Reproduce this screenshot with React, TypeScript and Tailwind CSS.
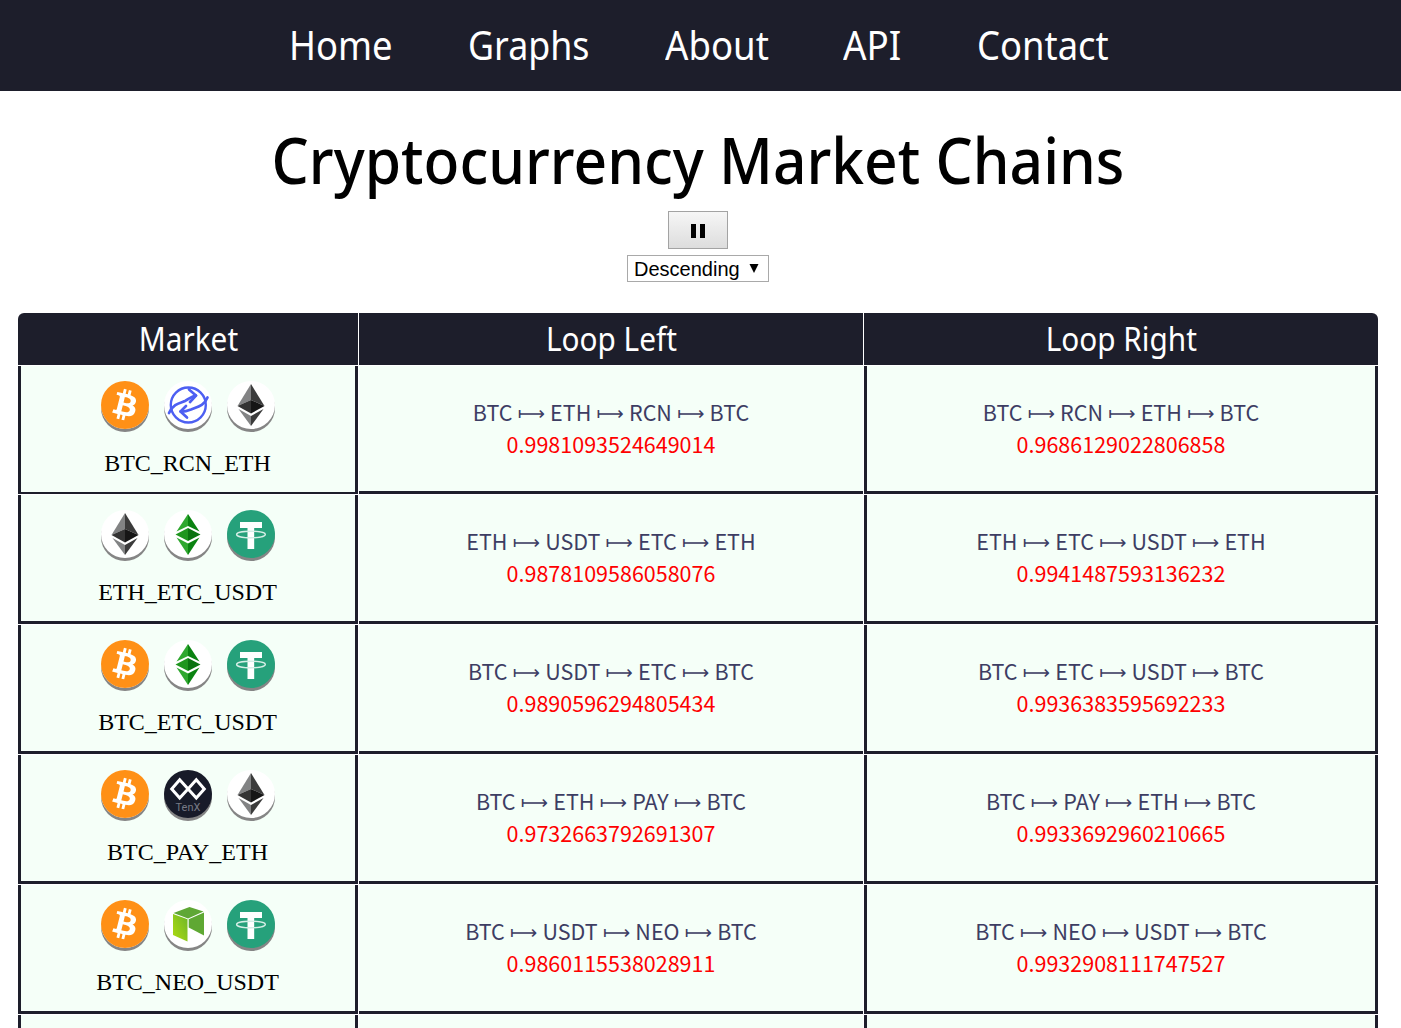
import React from "react";
import { SiBitcoin } from "react-icons/si";

const disc = "block h-12 w-12 overflow-hidden rounded-full shadow-[0_3px_0_#858585]";

function Btc() {
  return (
    <span className={`${disc} bg-white`}>
      <SiBitcoin className="h-12 w-12 scale-104 text-[#ff9016]" />
    </span>
  );
}

function Eth() {
  return (
    <svg viewBox="0 0 48 48" className={`${disc} bg-white`}>
      <path d="M24 3 10.500 25 24 19Z" fill="#828384" />
      <path d="M24 3 37.500 25 24 19Z" fill="#3b3b3b" />
      <path d="M10.500 25 24 19V32.500Z" fill="#343434" />
      <path d="M37.500 25 24 19V32.500Z" fill="#161616" />
      <path d="M11.500 28 24 35V45Z" fill="#828384" />
      <path d="M36.500 28 24 35V45Z" fill="#3b3b3b" />
    </svg>
  );
}

function Etc() {
  return (
    <svg viewBox="0 0 48 48" className={`${disc} bg-white`}>
      <path d="M24 4 12.500 21.500 24 16Z" fill="#2fa82f" />
      <path d="M24 4 35.500 21.500 24 16Z" fill="#0b8311" />
      <path d="M11.500 24.500 24 18V31Z" fill="#1f961f" />
      <path d="M36.500 24.500 24 18V31Z" fill="#0a7310" />
      <path d="M12.500 27.500 24 33.500V45Z" fill="#2fa82f" />
      <path d="M35.500 27.500 24 33.500V45Z" fill="#0b8311" />
    </svg>
  );
}

function Rcn() {
  return (
    <svg viewBox="0 0 48 48" className={`${disc} bg-white`} fill="none" stroke="#4d5ff2" strokeLinecap="round" strokeLinejoin="round">
      <circle cx="24.300" cy="24" r="17.500" strokeWidth="2.400" />
      <path d="M5 32C9 23 16 22 21 20 25 18 28 15 32 14.500" strokeWidth="2.700" />
      <path d="M25 8.500 32 14.500 26 21" strokeWidth="2.700" />
      <path d="M43.500 16.500C40 25 33 26 27 28.500 23 30 20 31 16.500 30.500" strokeWidth="2.700" />
      <path d="M22 25 16.500 30.500 23 36.500" strokeWidth="2.700" />
    </svg>
  );
}

function Usdt() {
  return (
    <svg viewBox="0 0 48 48" className={`${disc} bg-[#26a17b]`}>
      <path d="M13 12H35V18H27.200V39H20.500V18H13Z" fill="#fff" />
      <ellipse cx="24" cy="24.500" rx="14.400" ry="3.300" fill="none" stroke="#d5eee6" strokeWidth="1.400" />
    </svg>
  );
}

function Pay() {
  return (
    <svg viewBox="0 0 48 48" className={`${disc} bg-[#181b29]`}>
      <path d="M24 19 32.300 9.800 40.300 19 32.300 28 15.700 9.800 7.700 19 15.700 28Z" fill="none" stroke="#fff" strokeWidth="3" />
      <text x="24" y="40.500" textAnchor="middle" fontSize="11" fill="#777985" textLength="25" fontFamily="Roboto, sans-serif">TenX</text>
    </svg>
  );
}

function Neo() {
  return (
    <svg viewBox="0 0 48 48" className={`${disc} bg-white`}>
      <defs>
        <linearGradient id="neo" x1="0" x2="1" y1="1" y2="0">
          <stop offset="0" stopColor="#b0dc10" />
          <stop offset="1" stopColor="#6cb528" />
        </linearGradient>
      </defs>
      <path d="M9.500 13 25.500 7 39.500 11.500 24 18.500Z" fill="#5fa735" />
      <path d="M9 14 23.500 19.200V41.500L9 35Z" fill="url(#neo)" />
      <path d="M24.700 19.200 40 12.500V35.500L24.700 27.500Z" fill="#5fa833" />
    </svg>
  );
}

const icons: Record<string, () => React.ReactElement> = { BTC: Btc, ETH: Eth, ETC: Etc, RCN: Rcn, USDT: Usdt, PAY: Pay, NEO: Neo };

type Row = { coins: string[]; left: string; right: string };

const rows: Row[] = [
  { coins: ["BTC", "RCN", "ETH"], left: "0.9981093524649014", right: "0.9686129022806858" },
  { coins: ["ETH", "ETC", "USDT"], left: "0.9878109586058076", right: "0.9941487593136232" },
  { coins: ["BTC", "ETC", "USDT"], left: "0.9890596294805434", right: "0.9936383595692233" },
  { coins: ["BTC", "PAY", "ETH"], left: "0.9732663792691307", right: "0.9933692960210665" },
  { coins: ["BTC", "NEO", "USDT"], left: "0.9860115538028911", right: "0.9932908111747527" },
];

function Chain({ path, value }: { path: string[]; value: string }) {
  return (
    <div className="flex h-full flex-col items-center pt-[30px] font-['Noto_Sans_CJK_SC',sans-serif] text-[21.5px] leading-8">
      <div className="flex h-8 whitespace-nowrap text-[#3d3d63]">
        {path.map((c, i) => (
          <React.Fragment key={i}>
            {i > 0 && <span className="flex w-[37.700px] justify-center pt-px font-['DejaVu_Sans',sans-serif] text-[19px] leading-8">⟼</span>}
            <span>{c}</span>
          </React.Fragment>
        ))}
      </div>
      <div className="h-8 text-[#ff0000]">{value}</div>
    </div>
  );
}

const grid = "grid grid-cols-[340px_504px_514px] gap-x-px";
const link = "origin-left whitespace-nowrap";

export default function App() {
  return (
    <div className="h-[1028px] w-[1401px] overflow-hidden bg-white text-black">
      <nav className="flex h-[91px] justify-center gap-[76px] bg-[#1d1e2b] pr-[5px] font-['Noto_Sans',sans-serif] text-[40px] leading-[90px] text-white">
        <a className={`${link} w-[103px] scale-x-[0.91]`}>Home</a>
        <a className={`${link} w-[121px] scale-x-[0.895]`}>Graphs</a>
        <a className={`${link} w-[102px] scale-x-[0.915]`}>About</a>
        <a className={`${link} w-[58px] scale-x-[0.92]`}>API</a>
        <a className={`${link} w-[131px] scale-x-[0.91]`}>Contact</a>
      </nav>
      <main className="flex w-[1396px] flex-col items-center">
        <h1 className="mt-[26px] h-[94px] scale-x-[0.917] whitespace-nowrap font-['Noto_Sans',sans-serif] text-[64px] font-medium leading-[86px]">Cryptocurrency Market Chains</h1>
        <button className="flex h-[38px] w-[60px] items-center justify-center gap-1 border border-[#a3a3a3] bg-linear-to-b from-[#f6f6f6] to-[#dddddd] pt-0.5" aria-label="Pause">
          <span className="h-[14px] w-[5px] bg-black" />
          <span className="h-[14px] w-[5px] bg-black" />
        </button>
        <div className="mt-1.5 flex h-[27px] w-[142px] items-center border border-[#a9a9a9] pl-1.5 font-['Liberation_Sans',sans-serif] text-[20px] leading-6">
          <span className="w-[115px]">Descending</span>
          <svg viewBox="0 0 10 9" className="mb-px h-[9px] w-[10px]"><path d="M.5 0H9.500L5 9Z" /></svg>
        </div>
      </main>
      <div className="ml-[18px] mt-[31px] w-[1360px]">
        <div className={`${grid} mb-px h-[52px] text-center font-['Noto_Sans',sans-serif] text-[32px] leading-[52px] text-white`}>
          <div className="rounded-tl-md bg-[#1d1e2b]"><span className="inline-block scale-x-[0.93]">Market</span></div>
          <div className="bg-[#1d1e2b]"><span className="inline-block scale-x-[0.93]">Loop Left</span></div>
          <div className="rounded-tr-md bg-[#1d1e2b]"><span className="inline-block scale-x-[0.93]">Loop Right</span></div>
        </div>
        {rows.map((r, i) => {
          const [a, b, c] = r.coins;
          return (
            <div key={i} className={`${grid} mb-px ${i === 0 ? "h-32" : "h-[129px]"} *:border-[#1d1e2b] *:bg-[#f5fff8]`}>
              <div className={`flex flex-col items-center border-x-[3px] pt-[15px] ${i === 0 ? "border-b-2" : "border-b-[3px]"}`}>
                <div className="flex gap-[15px]">
                  {r.coins.map((n) => {
                    const Icon = icons[n];
                    return <Icon key={n} />;
                  })}
                </div>
                <div className="mt-5 pr-px font-['Liberation_Serif',serif] text-[24px] leading-7">{r.coins.join("_")}</div>
              </div>
              <div className="border-b-[3px]">
                <Chain path={[a, c, b, a]} value={r.left} />
              </div>
              <div className="border-x-[3px] border-b-[3px]">
                <Chain path={[a, b, c, a]} value={r.right} />
              </div>
            </div>
          );
        })}
        <div className={`${grid} h-[14px] *:border-[#1d1e2b] *:bg-[#f5fff8]`}>
          <div className="border-x-[3px]" />
          <div />
          <div className="border-x-[3px]" />
        </div>
      </div>
    </div>
  );
}
